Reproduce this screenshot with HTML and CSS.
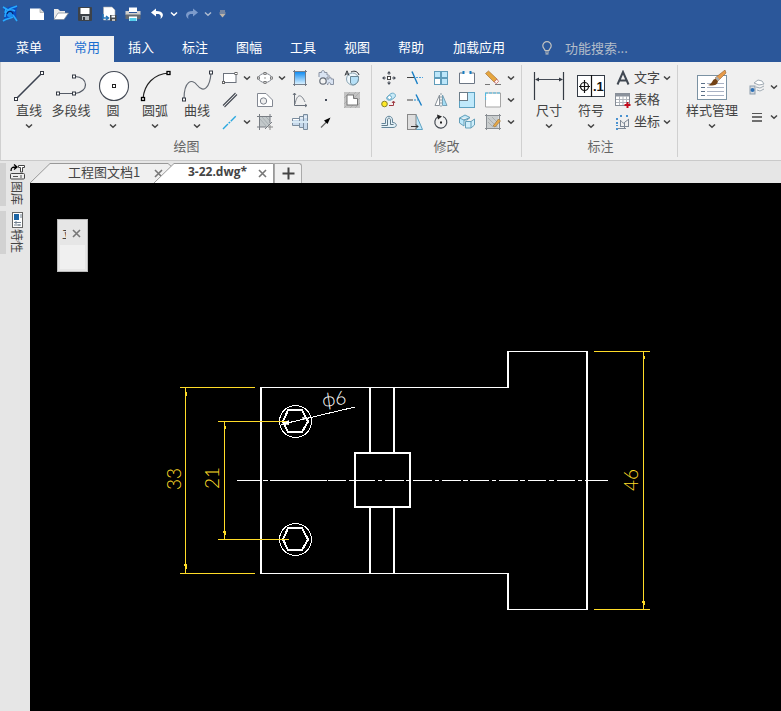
FILE: index.html
```html
<!DOCTYPE html>
<html lang="zh-CN">
<head>
<meta charset="utf-8">
<meta name="viewport" content="width=device-width, initial-scale=1">
<title>3-22.dwg</title>
<link rel="stylesheet" href="styles.css">
</head>
<body>
<svg class="defs" width="0" height="0" aria-hidden="true">
  <symbol id="chev" viewBox="0 0 8 6"><path d="M1 1.500 L4 4.300 L7 1.500" fill="none" stroke="currentColor" stroke-width="1.500"/></symbol>
  <symbol id="close" viewBox="0 0 9 9"><path d="M1 1 L8 8 M8 1 L1 8" stroke="#777" stroke-width="1.600"/></symbol>
</svg>
<div class="app">
  <header class="top">
    <div class="quick" role="toolbar" aria-label="快速访问">
      <span class="logo"><svg width="16" height="18" viewBox="0 0 16 18"><path d="M1 2 L5 3 C9 0 13 2 16 1 C13 5 15 9 14 15 L11 12 C9 14 5 13 1 17 C4 13 1 10 3 7 Z" fill="#0a4cc0"/><path d="M1 2 L6 5 C9 2 11 3 15 1 M3 12 C3 6 8 3 13 6 M1 16 C5 13 7 14 11 12 M11 10 L15 16 M4 4 L3 8" fill="none" stroke="#27aaff" stroke-width="1.600"/><circle cx="8" cy="9" r="3.200" fill="#1c8df0"/><path d="M5 9 C6 5.500 10 5.500 11 9" fill="none" stroke="#06226e" stroke-width="1.200"/></svg></span>
      <button class="qb" aria-label="新建"><svg width="16" height="14" viewBox="0 0 16 14"><path d="M1 1.500 H11 L15 5.500 V13 H1 Z" fill="#fff"/><path d="M11 1.500 V5.500 H15" fill="#d6d6d6" stroke="#999" stroke-width=".6"/></svg></button>
      <button class="qb" aria-label="打开"><svg width="16" height="14" viewBox="0 0 16 14"><path d="M1 12.500 V2 H5 L7 4 H12 V6" fill="#e9e9e9"/><path d="M1 12.500 L5 6 H15.500 L11 12.500 Z" fill="#fff" stroke="#7d8794" stroke-width=".7"/></svg></button>
      <button class="qb" aria-label="保存"><svg width="14" height="14" viewBox="0 0 14 14"><rect width="14" height="14" rx="1" fill="#3d4248"/><rect x="2.500" y="1" width="9" height="6" fill="#fff"/><rect x="4" y="9" width="7" height="4" fill="#aeb4ba"/><rect x="5" y="10" width="2" height="3" fill="#32373c"/></svg></button>
      <button class="qb" aria-label="另存为"><svg width="16" height="16" viewBox="0 0 16 16"><path d="M2.500 1 H11 L14 4 V14 H2.500 Z" fill="#fff" stroke="#aaa" stroke-width=".6"/><path d="M2 8 V12 H7 M5 10 L7.500 12 L5 14" fill="none" stroke="#2475b8" stroke-width="1.500"/><rect x="9" y="9" width="6.500" height="6" fill="#464b50"/><rect x="10.500" y="9.500" width="3.500" height="2" fill="#fff"/><rect x="11" y="13" width="3" height="2" fill="#bbb"/></svg></button>
      <button class="qb" aria-label="打印"><svg width="16" height="15" viewBox="0 0 16 15"><path d="M4 .5 H12 V5 H4 Z" fill="#fff"/><path d="M.5 4 H4 V6 H12 V4 H15.500 V8 H.5 Z" fill="#d0cfce"/><path d="M.5 7.500 H15.500 V12 H.5 Z" fill="#646a70"/><rect x="4" y="9.500" width="8" height="4.500" fill="#fff"/><rect x="4.500" y="11" width="7" height="3" fill="#53cdeb"/></svg></button>
      <button class="qb white" aria-label="撤销"><svg width="15" height="12" viewBox="0 0 15 12"><path d="M6 .5 L1 4.500 L6 8.500 V6 C10 5.500 11.500 7 10.500 11 C14.500 8 14 3 6 3 Z" fill="currentColor"/></svg></button>
      <button class="drop white" aria-label="撤销列表"><svg class="chev"><use href="#chev"/></svg></button>
      <button class="qb faded" aria-label="重做"><svg width="15" height="12" viewBox="0 0 15 12"><path d="M9 .5 L14 4.500 L9 8.500 V6 C5 5.500 3.500 7 4.500 11 C.5 8 1 3 9 3 Z" fill="currentColor"/></svg></button>
      <button class="drop pale" aria-label="重做列表"><svg class="chev"><use href="#chev"/></svg></button>
      <button class="custom" aria-label="自定义"><svg width="7" height="8" viewBox="0 0 7 8"><path d="M1 1 H6 M.5 3 H6.500" stroke="#c0b5a8"/><path d="M.5 4 H6.500 L3.500 7.500 Z" fill="#c0b5a8"/></svg></button>
    </div>
    <nav class="menu">
      <button class="mi first">菜单</button>
      <button class="mi on">常用</button>
      <button class="mi">插入</button>
      <button class="mi">标注</button>
      <button class="mi">图幅</button>
      <button class="mi">工具</button>
      <button class="mi">视图</button>
      <button class="mi">帮助</button>
      <button class="mi wide">加载应用</button>
      <label class="search"><svg width="12" height="14" viewBox="0 0 12 14"><path d="M4 9.500 C4 8 1.800 7.500 1.800 4.800 A4.200 4.200 0 0 1 10.200 4.800 C10.200 7.500 8 8 8 9.500 Z M4 11 H8 M4.500 12.800 H7.500" fill="none" stroke="#c3c3c0" stroke-width="1.200"/></svg><input type="text" placeholder="功能搜索..." aria-label="功能搜索"></label>
    </nav>
  </header>

  <section class="ribbon">
    <div class="group draw">
      <div class="body">
        <div class="bigs">
          <button class="big"><svg width="32" height="32" viewBox="0 0 32 32"><path d="M3.500 28.500 L28.500 3.500" stroke="#3c4250" stroke-width="1.600"/><g fill="#fff" stroke="#333842"><rect x="1.500" y="27.500" width="3" height="3"/><rect x="27.500" y="1.500" width="3" height="3"/></g></svg><span>直线</span><svg class="chev"><use href="#chev"/></svg></button>
          <button class="big"><svg width="32" height="32" viewBox="0 0 32 32"><path d="M3 23.500 H20 C34 22 34 7 20 6.500" fill="none" stroke="#555b66" stroke-width="1.200"/><g fill="#fff" stroke="#333842"><rect x="1.500" y="22" width="3" height="3"/><rect x="17.500" y="22" width="3" height="3"/><rect x="17.500" y="5" width="3" height="3"/></g></svg><span>多段线</span></button>
          <button class="big"><svg width="32" height="32" viewBox="0 0 32 32"><circle cx="17" cy="16" r="14.500" fill="#fff" stroke="#444a55" stroke-width="1.100"/><rect x="15.500" y="14.500" width="3" height="3" fill="#fff" stroke="#222"/></svg><span>圆</span><svg class="chev"><use href="#chev"/></svg></button>
          <button class="big"><svg width="32" height="32" viewBox="0 0 32 32"><path d="M4 29 C5 14 15 4 30 3" fill="none" stroke="#222" stroke-width="1.200"/><g fill="#fff" stroke="#000" stroke-width="1.300"><rect x="2.500" y="27.500" width="3" height="3"/><rect x="28" y="1.500" width="3" height="3"/></g></svg><span>圆弧</span><svg class="chev"><use href="#chev"/></svg></button>
          <button class="big"><svg width="32" height="32" viewBox="0 0 32 32"><path d="M3 29 C3 11 11 8 16 15 C23 24 29 17 30 3" fill="none" stroke="#666c75" stroke-width="1.200"/><g fill="#fff" stroke="#333842"><rect x="1.500" y="28" width="3" height="3"/><rect x="28.500" y="1" width="3" height="3"/></g></svg><span>曲线</span><svg class="chev"><use href="#chev"/></svg></button>
        </div>
        <div class="tools draw-tools">
          <button aria-label="矩形"><svg width="16" height="16" viewBox="0 0 16 16"><rect x="1.500" y="3.500" width="12.500" height="9" fill="#fff" stroke="#6c727c"/><rect x=".5" y="11.500" width="2" height="2" fill="#fff" stroke="#666"/><rect x="13" y="2.500" width="2" height="2" fill="#fff" stroke="#666"/></svg></button>
          <button class="drop" aria-label="矩形选项"><svg class="chev"><use href="#chev"/></svg></button>
          <button aria-label="椭圆"><svg width="16" height="16" viewBox="0 0 16 16"><ellipse cx="8" cy="8" rx="6.500" ry="4.500" fill="#fff" stroke="#838892"/><rect x="7.500" y="7.500" width="1" height="1" fill="#333"/><g fill="#fff" stroke="#666" stroke-width=".8"><rect x=".5" y="7" width="2" height="2"/><rect x="13.500" y="7" width="2" height="2"/><rect x="7" y="2.500" width="2" height="2"/><rect x="7" y="11.500" width="2" height="2"/></g></svg></button>
          <button class="drop" aria-label="椭圆选项"><svg class="chev"><use href="#chev"/></svg></button>
          <button aria-label="渐变填充"><svg width="16" height="16" viewBox="0 0 16 16"><defs><linearGradient id="gr" x1="0" y1="0" x2="0" y2="1"><stop offset="0" stop-color="#128cf0"/><stop offset="1" stop-color="#d8f0ff"/></linearGradient></defs><rect x="2.500" y="2" width="11" height="12" fill="url(#gr)"/><path d="M2.500 0 V16 M13.500 0 V16 M1 1.500 H15 M1 14.500 H15" stroke="#6a7380" stroke-width=".9"/></svg></button>
          <button aria-label="零件"><svg width="16" height="16" viewBox="0 0 16 16"><path d="M1 7 V2.500 H3.500 C2.500 0 7.500 0 6.500 2.500 H9 V5 C12 4 12 8 9 7 V9 H11 C10 6.500 14 6.500 13 9 H15.500 V14.500 H12.500 C13 12 9.500 12 10 14.500 H9" fill="#d9e3f2" stroke="#8992a2"/><circle cx="5" cy="11" r="3.200" fill="#f4f4f4" stroke="#666d78" stroke-width="1.200"/></svg></button>
          <button aria-label="局部放大"><svg width="16" height="16" viewBox="0 0 16 16"><circle cx="8.500" cy="9" r="6" fill="#eef7fc" stroke="#8aa5b4"/><path d="M6.500 6.500 H14.500 C15 12 12 15 8.500 15 L6.500 13 Z" fill="#b6e0f7" stroke="#6a8796"/><path d="M1 5.500 L3 .8 L5 5.500 M1.800 4 H4.200 M7 2 C11 0 14 2 15 5" fill="none" stroke="#30353b"/></svg></button>

          <button aria-label="平行线"><svg width="16" height="16" viewBox="0 0 16 16"><path d="M1 13.500 L13.500 1 M2.500 15 L15 2.500" stroke="#454a54" stroke-width="1.100"/></svg></button>
          <span></span>
          <button aria-label="多边形"><svg width="16" height="16" viewBox="0 0 16 16"><path d="M.5 1.500 H9 L15.500 8 V14.500 H.5 Z" fill="#fff" stroke="#838892"/><circle cx="6.500" cy="9" r="3.200" fill="#eee" stroke="#7b818c"/></svg></button>
          <span></span>
          <button aria-label="公式曲线"><svg width="16" height="16" viewBox="0 0 16 16"><path d="M2.500 1 V13.500 H15" fill="none" stroke="#69707a"/><path d="M1 3 L2.500 1 L4 3 M13 12 L15 13.500 L13 15" fill="none" stroke="#69707a"/><path d="M3 12 C5 2 9 1 13 10" fill="none" stroke="#7d838c"/></svg></button>
          <button aria-label="点"><svg width="16" height="16" viewBox="0 0 16 16"><rect x="7" y="7" width="2" height="2" fill="#444c5a"/></svg></button>
          <button aria-label="边界"><svg width="16" height="16" viewBox="0 0 16 16"><rect width="16" height="16" fill="#c3c3c3"/><path d="M0 6 L6 0 M0 12 L12 0 M0 16 L16 0 M6 16 L16 6 M11 16 L16 11" stroke="#aaa" stroke-width=".8"/><path d="M3 3 H9.500 V6.500 H13.500 V13 H3 Z" fill="#fff" stroke="#777"/></svg></button>

          <button aria-label="中心线"><svg width="16" height="16" viewBox="0 0 16 16"><path d="M1 15 L14.500 1.500" stroke="#2aa8e0" stroke-width="1.400" stroke-dasharray="7 1 2 1"/></svg></button>
          <button class="drop" aria-label="中心线选项"><svg class="chev"><use href="#chev"/></svg></button>
          <button aria-label="剖面线"><svg width="16" height="16" viewBox="0 0 16 16"><path d="M3 2.500 H13 V10 L9 13 H3 Z" fill="#c2c8ca"/><path d="M3 5 L10 13 M5 3 L12 11 M9 3 L13 7" stroke="#a2aaad" stroke-width=".8"/><path d="M2.500 0 V16 M13 0 V9 M0 2.500 H15 M0 13 H9 M8 15 L15 8" stroke="#787d83"/><path d="M13 11 V16 M11 13 H16" stroke="#888"/></svg></button>
          <span></span>
          <button aria-label="轴"><svg width="16" height="16" viewBox="0 0 16 16"><path d="M.5 4.500 H7.500 V2.500 H11.500 V.5 H15.500 V15.500 H11.500 V13.500 H7.500 V11.500 H.5 Z" fill="#c6d8eb" stroke="#7a8c9d"/><path d="M7.500 4 V12 M11.500 2 V14" stroke="#7a8c9d"/><path d="M1 5.500 H7 M8 4 H11 M12 3 H15" stroke="#fff"/><path d="M0 8 H16" stroke="#fff" stroke-width="2"/><path d="M0 8 H16" stroke="#79b4d8" stroke-width=".6"/></svg></button>
          <button aria-label="箭头"><svg width="16" height="16" viewBox="0 0 16 16"><path d="M3 13.500 L9 7.500" stroke="#666" stroke-width="1.200"/><path d="M12.500 3.500 L6 6.500 L9.500 10 Z" fill="#000"/></svg></button>
        </div>
      </div>
      <h2>绘图</h2>
    </div>

    <div class="group modify">
      <div class="body">
        <div class="tools modify-tools">
          <button aria-label="平移"><svg width="16" height="16" viewBox="0 0 16 16"><path d="M8 2 V5 M8 11 V14 M2 8 H5 M11 8 H14" stroke="#656b75"/><path d="M8 1 L10 3.500 H6 Z M8 15 L10 12.500 H6 Z M1 8 L3.500 6 V10 Z M15 8 L12.500 6 V10 Z" fill="#454b55"/><rect x="6.500" y="6.500" width="3" height="3" fill="#fff" stroke="#444"/></svg></button>
          <button aria-label="裁剪"><svg width="16" height="16" viewBox="0 0 16 16"><path d="M0 7.500 H8" stroke="#444"/><path d="M9 7.500 H16" stroke="#4ba1dc" stroke-dasharray="2 1"/><path d="M5 1.500 L10.500 14" stroke="#167ec5" stroke-width="1.400"/></svg></button>
          <button aria-label="阵列"><svg width="16" height="16" viewBox="0 0 16 16"><g fill="#bce6fa" stroke="#5f9cba"><rect x="1.500" y="1.500" width="6" height="6"/><rect x="8.500" y="1.500" width="6" height="6"/><rect x="8.500" y="8.500" width="6" height="6"/><rect x="1.500" y="8.500" width="6" height="6" fill="#fff"/></g></svg></button>
          <button aria-label="打断"><svg width="16" height="16" viewBox="0 0 16 16"><path d="M4 3 H.5 V13.500 H15.500 V3 H12" fill="#fff" stroke="#6c7684"/><path d="M4.500 1 V4 M11.500 1 V4" stroke="#157cc2" stroke-width="2"/></svg></button>
          <button aria-label="删除"><svg width="16" height="16" viewBox="0 0 16 16"><path d="M.5 3.500 L3.500 1 L12 9 L9 12 Z" fill="#e6a63e" stroke="#a6763c" stroke-width=".7"/><path d="M9 12 L12 9 L13.500 11.500 L11.500 13.500 Z" fill="#fff0ea" stroke="#b66" stroke-width=".8"/><path d="M0 14.500 H5 M10 14.500 H16" stroke="#777"/></svg></button>
          <button class="drop" aria-label="删除选项"><svg class="chev"><use href="#chev"/></svg></button>

          <button aria-label="复制"><svg width="16" height="16" viewBox="0 0 16 16"><path d="M6 5 L10 1.500 C14 0 16 4 13 6 L10 8 C7 9 4.500 7 6 5 Z" fill="#c7e9f7" stroke="#68aac7"/><circle cx="8.500" cy="5.500" r="2" fill="#fff" stroke="#68aac7"/><circle cx="3.500" cy="12" r="2.800" fill="#ffe926" stroke="#86822a"/><path d="M8 13.500 H12.500 V9.500 M11 11 L12.500 9 L14 11" fill="none" stroke="#9f3a42"/></svg></button>
          <button aria-label="延伸"><svg width="16" height="16" viewBox="0 0 16 16"><path d="M0 8 H6" stroke="#444"/><path d="M7 8 H11" stroke="#278dcc" stroke-dasharray="2 1"/><path d="M9 2.500 L14.500 13.500" stroke="#167ec5" stroke-width="1.400"/></svg></button>
          <button aria-label="镜像"><svg width="16" height="16" viewBox="0 0 16 16"><path d="M6.500 3 V13.500 H2 Z" fill="#fff" stroke="#8a929a"/><path d="M9.500 3 V13.500 H14 Z" fill="#a5ddf5" stroke="#76a0b5"/><path d="M8 1 V15" stroke="#91a1aa" stroke-dasharray="2 1"/></svg></button>
          <button aria-label="缩放"><svg width="16" height="16" viewBox="0 0 16 16"><rect x=".5" y=".5" width="15" height="15" fill="#c0e9fb" stroke="#5ca0c0"/><rect x=".5" y=".5" width="8" height="8" fill="#fff" stroke="#6b7b87"/></svg></button>
          <button aria-label="选择"><svg width="16" height="16" viewBox="0 0 16 16"><path d="M.5 8 V15 H15.500 V1 H.5 Z" fill="#fff" stroke="#a5a5a5"/><path d="M0 1 H16 M.5 1 V9" stroke="#4dbae3" stroke-width="1.200" stroke-dasharray="3 1"/></svg></button>
          <button class="drop" aria-label="选择选项"><svg class="chev"><use href="#chev"/></svg></button>

          <button aria-label="等距线"><svg width="16" height="16" viewBox="0 0 16 16"><path d="M.5 9.500 H4.500 V6 C4.500 1 11.500 1 11.500 6 V8.500 C16.500 8.500 16.500 13.500 12 13.500 H.5" fill="#e4f2f8" stroke="#628499"/><path d="M.5 11.500 H6.500 V6 C6.500 3.500 9.500 3.500 9.500 6 V10.500 H12.500" fill="none" stroke="#637b8a"/></svg></button>
          <button aria-label="拉伸"><svg width="16" height="16" viewBox="0 0 16 16"><path d="M9 .5 L15.500 15.500 H9" fill="#c1e8fa" stroke="#5ea1c1"/><rect x=".5" y=".5" width="8.500" height="15" fill="#dedede" stroke="#888"/><path d="M4 12.500 H11 M9 10.500 L11 12.500 L9 14.500" stroke="#333" fill="none"/></svg></button>
          <button aria-label="旋转"><svg width="16" height="16" viewBox="0 0 16 16"><path d="M10 2.500 A6 6 0 1 1 5 2.800" fill="none" stroke="#444a52" stroke-width="1.200"/><path d="M4 .5 L9 2.500 L5 5.500 Z" fill="#222"/><rect x="7" y="7.500" width="2" height="2" fill="#222"/></svg></button>
          <button aria-label="分解"><svg width="16" height="16" viewBox="0 0 16 16"><path d="M.5 4 L6 1 L11 3.500 L8 6 H5 V12 L.5 9 Z M.5 4 L5 6 L11 3.500" fill="#bde8fa" stroke="#639fb9"/><path d="M6.500 7.500 H12 V14 H6.500 Z M12 7.500 L15.500 5 V11 L12 14" fill="#cfeefb" stroke="#639fb9"/></svg></button>
          <button aria-label="编辑填充"><svg width="16" height="16" viewBox="0 0 16 16"><rect x="1.500" y="2" width="12" height="12" fill="#c9cdce"/><path d="M3 4 L12 13 M3 8 L8 13 M7 3 L13 9" stroke="#aaafb0"/><path d="M1.500 0 V16 M14.500 0 V16 M0 1.500 H16 M0 14.500 H16" stroke="#888d92"/><path d="M8 12 L13.500 5 L15.500 7 L10 13 Z" fill="#e7a848" stroke="#83602d" stroke-width=".5"/></svg></button>
          <button class="drop" aria-label="编辑填充选项"><svg class="chev"><use href="#chev"/></svg></button>
        </div>
      </div>
      <h2>修改</h2>
    </div>

    <div class="group note">
      <div class="body">
        <div class="bigs">
          <button class="big"><svg width="32" height="32" viewBox="0 0 32 32"><path d="M1.500 2 V30 M30.500 2 V30" stroke="#353b44" stroke-width="1.200"/><path d="M3 9.500 H29" stroke="#454b55"/><path d="M2 9.500 L6 7.500 V11.500 Z M30 9.500 L26 7.500 V11.500 Z" fill="#353b44"/></svg><span>尺寸</span><svg class="chev"><use href="#chev"/></svg></button>
          <button class="big"><svg width="32" height="32" viewBox="0 0 32 32"><rect x="2.500" y="5.500" width="27" height="21" fill="#fff" stroke="#343b45"/><path d="M16.500 5 V27 M9.500 10 V23 M4 16.500 H15" stroke="#111" stroke-width="1.200"/><circle cx="9.500" cy="16.500" r="4" fill="none" stroke="#111" stroke-width="1.200"/><text class="sym-text" x="18" y="21">.1</text></svg><span>符号</span><svg class="chev"><use href="#chev"/></svg></button>
        </div>
        <div class="rows">
          <button class="row"><svg width="16" height="16" viewBox="0 0 16 16"><path d="M2.500 14.500 L8 2 L13.500 14.500 M4.500 10.500 H11.500" fill="none" stroke="#414852" stroke-width="2"/></svg><span>文字</span><svg class="chev"><use href="#chev"/></svg></button>
          <button class="row"><svg width="16" height="16" viewBox="0 0 16 16"><rect x=".5" y="1.500" width="14" height="12" fill="#fff" stroke="#868d97"/><rect x=".5" y="1.500" width="14" height="3" fill="#8b929c"/><path d="M1 7.500 H14 M1 10.500 H14 M4.500 4 V13 M8 4 V13 M11.500 4 V13" stroke="#b1b6bd"/><path d="M12.500 10 V16 M9.500 13 H15.500" stroke="#c40c1d" stroke-width="2"/></svg><span>表格</span></button>
          <button class="row"><svg width="16" height="16" viewBox="0 0 16 16"><path d="M5.500 6 V13 M5.500 7 C8 7 7 11 10 8 L14 5 M13.500 5 V13 M5 12.500 H14 M9.500 9 V15 M3 14.500 H11" fill="none" stroke="#7d8794"/><path d="M2 4 V6 M11 2 H14 M2 8 V12 M2 14 V16 M5 2 H7" stroke="#4a92d0" stroke-width="2" stroke-dasharray="2 1"/></svg><span>坐标</span><svg class="chev"><use href="#chev"/></svg></button>
        </div>
      </div>
      <h2>标注</h2>
    </div>

    <div class="group style">
      <div class="body">
        <button class="big stylebtn"><svg width="32" height="32" viewBox="0 0 32 32"><rect x="1.500" y="5.500" width="29" height="24" fill="#fff" stroke="#7b92a3"/><path d="M5 13.500 H9 M5 17.500 H9 M5 21.500 H9 M5 25.500 H9" stroke="#5b7088"/><path d="M11 13.500 H28 M11 17.500 H28 M11 21.500 H28 M11 25.500 H28" stroke="#a9b2c4"/><path d="M19 8 L29 0 L30 3 L22 11 Z" fill="#e69a49" stroke="#95602d" stroke-width=".6"/><path d="M12 15 C17 14 16 8 20 9 L22 11.500 C21 16 16 16 12 15 Z" fill="#744315"/><path d="M19 8 L21 6.500 L24 9.500 L22 11 Z" fill="#aaa"/></svg><span>样式管理</span><svg class="chev"><use href="#chev"/></svg></button>
        <div class="props">
          <button aria-label="图层"><svg width="16" height="16" viewBox="0 0 16 16"><path d="M5 4 L9 1 L13 2 L15 5 L10 6 Z M7 8 L11 9 L15 7 M8 11 L11 12 L15 10" fill="#fff" stroke="#a0aab3"/><rect x="1" y="7" width="5" height="8" fill="#d5dae0" stroke="#8e9dab"/><circle cx="3.500" cy="11" r="2" fill="#2c70b6"/></svg></button>
          <button class="drop" aria-label="图层选项"><svg class="chev"><use href="#chev"/></svg></button>
          <span class="combo"></span>
          <button aria-label="线宽"><svg width="16" height="16" viewBox="0 0 16 16"><path d="M3 4.500 H13" stroke="#555"/><path d="M3 8 H13 M3 12 H13" stroke="#444" stroke-width="1.500"/></svg></button>
          <button class="drop" aria-label="线宽选项"><svg class="chev"><use href="#chev"/></svg></button>
          <span class="combo"></span>
        </div>
      </div>
    </div>
  </section>

  <main class="work">
    <aside class="side">
      <button class="sidetab"><svg width="15" height="16" viewBox="0 0 15 16"><path d="M1 7 C1 3 3 3 6 3 M4 .5 L7 3 L4 5.500" fill="none" stroke="#000" stroke-width="1.300"/><path d="M8.500 1.500 H14.500 V3.500 H12.500 V8 H10.500 V3.500 H8.500 Z" fill="#fff" stroke="#444"/><rect x=".5" y="9.500" width="14" height="5.500" rx="1" fill="#eee" stroke="#444"/><path d="M3 12.500 H8 M11 11 V14" stroke="#555"/></svg><span>图库</span></button>
      <button class="sidetab"><svg width="15" height="16" viewBox="0 0 15 16"><rect x="2.500" y=".5" width="10" height="15" fill="#fff" stroke="#666"/><rect x="4" y="2" width="5" height="6" fill="#1b65a5"/><path d="M10 3 H12 M10 5 H12 M4 10.500 H11 M4 13 H11 M6 9 V12 M9 12 V14" stroke="#708090"/></svg><span>特性</span></button>
    </aside>
    <div class="docs">
      <div class="doctabs">
        <div class="doc one"><svg class="shape" viewBox="0 0 142 20" preserveAspectRatio="none"><path d="M0 20 L20 .5 H138 L142 4 V20" fill="#f0f0f0" stroke="#999"/></svg><button class="name">工程图文档1</button><button class="x" aria-label="关闭"><svg><use href="#close"/></svg></button></div>
        <div class="doc two"><svg class="shape" viewBox="0 0 120 20" preserveAspectRatio="none"><path d="M0 20 L20 .5 H119.500 V20" fill="#fff" stroke="#999"/></svg><button class="name">3-22.dwg*</button><button class="x" aria-label="关闭"><svg><use href="#close"/></svg></button></div>
        <button class="plus" aria-label="新建文档"><svg width="13" height="13" viewBox="0 0 13 13"><path d="M6.500 .5 V12.500 M.5 6.500 H12.500" stroke="#444" stroke-width="2"/></svg></button>
      </div>
      <div class="canvas">
        <svg class="drawing" width="751" height="528" viewBox="30 183 751 528">
          <g class="w1"><path d="M261 387.500 H509 M507 351.500 H588 M507 609.500 H588 M260 573.500 H509"/>
          <path d="M237 480.500 H261 M263 480.500 H268 M270 480.500 H327 M328 480.500 H346 M349 480.500 H375 M378 480.500 H382 M385 480.500 H404 M406 480.500 H411 M413 480.500 H432 M435 480.500 H439 M442 480.500 H461 M463 480.500 H468 M470 480.500 H489 M492 480.500 H496 M499 480.500 H518 M520 480.500 H525 M528 480.500 H546 M549 480.500 H554 M557 480.500 H575 M578 480.500 H582 M585 480.500 H608"/>
          <circle cx="295.500" cy="421.500" r="16"/><circle cx="295.500" cy="539.500" r="16"/></g>
          <g class="w2"><path d="M261 387 V574 M508 351 V388 M508 573 V610 M587 351 V610 M370 388 V453 M394 388 V453 M370 507 V573 M394 507 V573"/><rect x="355" y="453" width="55" height="54"/>
          <path d="M283 421.500 L288 410 H302 L308 421.500 L302 432 H288 Z M283 539.500 L288 528 H302 L308 539.500 L302 550 H288 Z"/></g>
          <g class="y1"><path d="M180 387.500 H255 M180 573.500 H255 M185.500 387 V574 M218 421.500 H289 M218 539.500 H289 M224.500 421 V540 M594 351.500 H650 M594 609.500 H650 M643.500 351 V610"/>
          <path d="M186.500 392 V396 M186.500 564 V569 M184.500 564 V566 M225.500 426 V429 M225.500 531 V535 M223.500 531 V533 M644.500 356 V359 M644.500 601 V605 M642.500 601 V603"/></g>
          <path class="w1" d="M281 424.500 L355 407"/><path d="M282 424 L289 420 V425 Z M309 418 L302 417 L303 420 Z" fill="#fff"/>
          <text class="dim" transform="translate(181 490) rotate(-90)">33</text>
          <text class="dim" transform="translate(219 489) rotate(-90)">21</text>
          <text class="dim" transform="translate(638 491) rotate(-90)">46</text>
          <text class="dim dia" transform="translate(323 407) rotate(-8)">ϕ6</text>
        </svg>
        <div class="float"><div class="fhead"><span class="ftitle">立</span><button class="x" aria-label="关闭"><svg><use href="#close"/></svg></button></div><div class="fbody"></div></div>
      </div>
    </div>
  </main>
</div>
</body>
</html>
```
FILE: styles.css
```css
* { box-sizing: border-box; }
body {
  margin: 0;
  font: 13px/18px "Noto Sans CJK SC", sans-serif;
  color: #444;
  background: #e6e6e6;
}
button {
  font: inherit;
  color: inherit;
  background: none;
  border: 0;
  padding: 0;
  margin: 0;
}
svg { display: block; flex: none; }
.defs { position: absolute; }
.chev { width: 8px; height: 6px; }
.app { display: flex; flex-direction: column; min-height: 100vh; }

/* title bar and menu */
.top { background: #2b579a; color: #fff; overflow: hidden; }
.quick { display: flex; height: 28px; align-items: center; }
.logo { width: 20px; margin-right: 5px; display: grid; place-items: center; }
.qb { width: 24px; height: 24px; display: grid; place-items: center; }
.drop { width: 10px; display: grid; place-items: center; }
.custom { width: 18px; display: grid; place-items: center; }
.faded { color: #7d9bcb; }
.pale { color: #aebbd0; }
.menu { display: flex; height: 34px; padding: 8px 0 0 2px; }
.mi { width: 54px; height: 26px; padding-bottom: 4px; white-space: nowrap; }
.mi.first { margin-right: 4px; }
.mi.on { background: #f0f0f0; color: #1a6fd0; }
.mi.wide { width: 82px; }
.search { display: flex; align-items: center; margin-left: 21px; gap: 12px; padding-bottom: 2px; }
.search input {
  width: 100px;
  border: 0;
  padding: 0;
  outline: 0;
  background: none;
  font: inherit;
  color: #fff;
}
.search input::placeholder { color: #b4bdc9; opacity: 1; }

/* ribbon */
.ribbon {
  display: flex;
  background: #f0f0f0;
  border-left: 1px solid #d0d0d0;
  border-bottom: 1px solid #cacaca;
  padding: 3px 0;
  overflow: hidden;
}
.group { flex: none; border-right: 1px solid #d0d0d0; padding-top: 2px; }
.group h2 {
  margin: 2px 0 1px;
  font-size: 13px;
  line-height: 20px;
  font-weight: 400;
  color: #666;
  text-align: center;
}
.body { display: flex; height: 67px; }
.draw { width: 371px; padding-left: 7px; }
.draw h2 { margin-right: 6px; }
.modify { width: 150px; padding-left: 4px; }
.note { width: 156px; padding-left: 6px; }
.modify h2, .note h2 { padding-right: 4px; }
.style { flex: 1; padding-left: 6px; border-right: 0; }
.bigs { display: flex; }
.big {
  width: 42px;
  padding-top: 3px;
  display: flex;
  flex-direction: column;
  align-items: center;
  justify-content: flex-start;
  white-space: nowrap;
}
.big span { margin-top: -1px; }
.big .chev { margin-top: 4px; }
.stylebtn { width: 56px; }
.tools { display: grid; grid-auto-rows: 22px; }
.tools button, .props button { display: grid; place-items: center; }
.draw-tools { grid-template-columns: 24px 11px 24px 10px 26px 26px 26px; }
.modify-tools { grid-template-columns: 26px 26px 26px 26px 26px 8px; }
.rows { display: flex; flex-direction: column; margin-left: 3px; }
.row { display: flex; align-items: center; height: 22px; gap: 3px; }
.row span { padding-bottom: 2px; }
.props {
  display: grid;
  grid-template-columns: 16px 16px 1fr;
  grid-auto-rows: 30px;
  margin-left: 9px;
  padding-top: 5px;
  column-gap: 1px;
  flex: 1;
}
.props .drop { width: 16px; }
.combo { border: 1px solid #c4c4c4; background: #fff; margin: 5px 0; min-width: 0; }
.sym-text { font: 700 13px "Liberation Sans", sans-serif; fill: #111; }

/* work area */
.work { flex: 1; display: grid; grid-template-columns: 30px 1fr; }
.side { display: flex; flex-direction: column; gap: 5px; padding-top: 2px; background: #e6e6e6; }
.sidetab {
  display: flex;
  flex-direction: column;
  align-items: center;
  justify-content: flex-start;
  gap: 1px;
  width: 28px;
  height: 43px;
  padding-top: 1px;
  border-left: 6px solid #d2d2d2;
}
.sidetab span {
  writing-mode: vertical-rl;
  text-orientation: sideways;
  font-size: 12px;
  line-height: 16px;
}
.docs { display: flex; flex-direction: column; min-width: 0; }
.doctabs { display: flex; height: 22px; padding-top: 2px; }
.doc { position: relative; display: flex; align-items: center; }
.shape { position: absolute; inset: 0; width: 100%; height: 100%; }
.doc button { position: relative; }
.name { padding-bottom: 2px; }
.doc.one { width: 142px; padding-left: 38px; }
.doc.two {
  width: 120px;
  margin-left: -18px;
  padding-left: 34px;
  font: 700 12px/18px "Open Sans", sans-serif;
}
.doc .x { margin-left: auto; margin-right: 7px; }
.doc.one .x { margin-right: 9px; }
.x svg { width: 9px; height: 9px; }
.plus { width: 28px; display: grid; place-items: center; background: #f0f0f0; border: 1px solid #aaa; border-bottom: 0; border-radius: 0 3px 0 0; }
.canvas { position: relative; flex: 1; background: #000; overflow: hidden; }
.w1, .w2, .y1 { fill: none; shape-rendering: crispEdges; }
.w1 { stroke: #fff; stroke-width: 1; }
.w2 { stroke: #fff; stroke-width: 2; }
.y1 { stroke: #ffdc28; stroke-width: 1; }
.dim { font: 300 19px Lato, sans-serif; fill: #ffdc28; }
.dim.dia { fill: #fff; }
.float {
  position: absolute;
  left: 27px;
  top: 36px;
  width: 31px;
  height: 53px;
  padding: 2px;
  background: #e6e6e6;
  border: 1px solid #bbb;
}
.fhead { display: flex; align-items: center; height: 23px; padding-left: 2px; gap: 6px; }
.ftitle { width: 4px; overflow: hidden; white-space: nowrap; font-size: 12px; }
.fbody { height: 24px; background: #f0f0f0; }
```
